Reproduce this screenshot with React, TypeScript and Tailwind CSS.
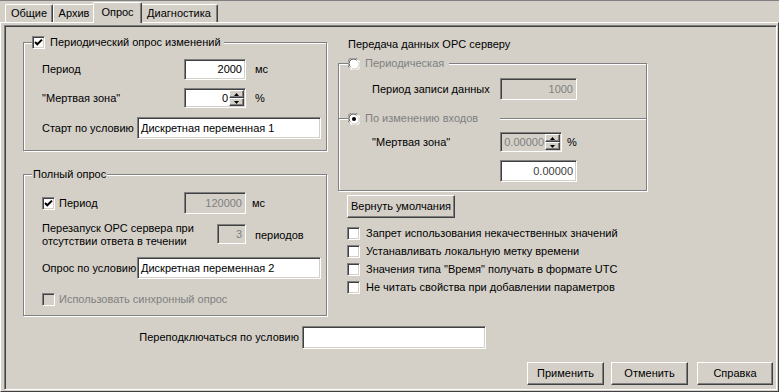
import React from 'react';

const sunken =
  'border border-t-[#808080] border-l-[#808080] border-b-white border-r-white shadow-[inset_1px_1px_0_#404040,inset_-1px_-1px_0_#d4d0c8]';
const raised =
  'border border-t-white border-l-white border-b-[#404040] border-r-[#404040] shadow-[inset_-1px_-1px_0_#808080]';
const etched = 'border border-[#808080] shadow-[inset_1px_1px_0_#fff,1px_1px_0_#fff]';

interface FieldProps {
  w: string;
  h: string;
  value?: string;
  disabled?: boolean;
  left?: boolean;
  dim?: boolean;
}

const Field: React.FC<FieldProps> = ({ w, h, value = '', disabled, left, dim }) => (
  <div
    className={`${sunken} ${w} ${h} flex items-center shrink-0 px-[3px] ${
      disabled ? 'bg-[#d4d0c8] text-[#808080]' : 'bg-white'
    } ${dim ? 'text-[#404040]' : ''} ${left ? 'justify-start' : 'justify-end'}`}
  >
    {value}
  </div>
);

const Spin: React.FC<{ w: string; value: string; disabled?: boolean }> = ({ w, value, disabled }) => (
  <div className={`${sunken} ${w} h-[20px] flex shrink-0 ${disabled ? 'bg-[#d4d0c8] text-[#808080]' : 'bg-white'}`}>
    <div className="flex-1 flex items-center justify-end pr-[1px] pl-[3px]">{value}</div>
    <div className="w-[15px] flex flex-col my-[1px] mr-[1px]">
      <div className={`${raised} flex-1 bg-[#d4d0c8] flex items-center justify-center`}>
        <svg width="5" height="3" viewBox="0 0 5 3">
          <path d="M2.5 0 L5 3 L0 3 Z" fill="#000" />
        </svg>
      </div>
      <div className={`${raised} flex-1 bg-[#d4d0c8] flex items-center justify-center`}>
        <svg width="5" height="3" viewBox="0 0 5 3">
          <path d="M0 0 L5 0 L2.5 3 Z" fill="#000" />
        </svg>
      </div>
    </div>
  </div>
);

const Check: React.FC<{ checked?: boolean; disabled?: boolean }> = ({ checked, disabled }) => (
  <div className={`${sunken} w-[13px] h-[13px] shrink-0 ${disabled ? 'bg-[#d4d0c8]' : 'bg-white'} flex items-center justify-center`}>
    {checked && (
      <svg width="9" height="9" viewBox="0 0 9 9">
        <path d="M1 4 L3.3 6.3 L8 1.6" stroke="#000" strokeWidth="2" fill="none" />
      </svg>
    )}
  </div>
);

const Radio: React.FC<{ checked?: boolean }> = ({ checked }) => (
  <svg width="12" height="12" viewBox="0 0 12 12" className="shrink-0">
    <circle cx="6" cy="6" r="5.5" fill="#fff" />
    <path d="M1.2 9.5 A5.5 5.5 0 0 1 9.5 1.2" stroke="#808080" strokeWidth="1" fill="none" />
    <path d="M2.3 8.6 A4.4 4.4 0 0 1 8.6 2.3" stroke="#404040" strokeWidth="1" fill="none" />
    <path d="M10.8 2.5 A5.5 5.5 0 0 1 2.5 10.8" stroke="#fff" strokeWidth="1" fill="none" />
    <path d="M9.7 3.4 A4.4 4.4 0 0 1 3.4 9.7" stroke="#d4d0c8" strokeWidth="1" fill="none" />
    {checked && <circle cx="6" cy="6" r="2" fill="#000" />}
  </svg>
);

const Button: React.FC<{ w: string; children: React.ReactNode; className?: string }> = ({ w, children, className = '' }) => (
  <div className={`${raised} ${w} h-[23px] bg-[#d4d0c8] flex items-center justify-center shrink-0 ${className}`}>
    {children}
  </div>
);

const Tab: React.FC<{ label: string; w: string; active?: boolean }> = ({ label, w, active }) => (
  <div
    className={`${w} flex items-center justify-center bg-[#d4d0c8] border-t border-l border-t-white border-l-white border-r border-r-[#404040] rounded-t-[2px] shadow-[inset_-1px_0_0_#808080] ${
      active ? 'h-[21px] -mb-[1px] -mx-[2px] relative z-10 pb-[2px]' : 'h-[18px]'
    }`}
  >
    {label}
  </div>
);

const CHECKS = [
  'Запрет использования некачественных значений',
  'Устанавливать локальную метку времени',
  'Значения типа "Время" получать в формате UTC',
  'Не читать свойства при добавлении параметров',
];

export default function App() {
  return (
    <div className="w-[779px] h-[392px] bg-[#d4d0c8] border-t border-[#808080] flex flex-col overflow-hidden text-[11px] leading-[13px] text-black font-['Liberation_Sans',Arial,sans-serif]">
      {/* Tabs */}
      <div className="h-[21px] flex items-end pl-[5px] shrink-0">
        <Tab label="Общие" w="w-[48px]" />
        <Tab label="Архив" w="w-[42px]" />
        <Tab label="Опрос" w="w-[49px]" active />
        <Tab label="Диагностика" w="w-[78px]" />
      </div>

      {/* Tab page */}
      <div className="flex-1 flex flex-col border border-t-white border-l-white border-r-[#404040] border-b-[#404040]">
        <div className={`${sunken} flex-1 flex flex-col ml-[3px] mt-[2px] mr-[1px] mb-[1px]`}>
          <div className="flex pl-[18px]">
            {/* Left column */}
            <div className="w-[304px] pt-[16px] flex flex-col">
              <div className={`${etched} h-[109px] flex flex-col`}>
                <div className="-mt-[7px] ml-[8px] self-start h-[13px] bg-[#d4d0c8] pr-[3px] flex items-center gap-[5px]">
                  <Check checked />
                  <span>Периодический опрос изменений</span>
                </div>
                <div className="mt-[10px] h-[21px] pl-[18px] flex items-center">
                  <span className="w-[142px]">Период</span>
                  <Field w="w-[62px]" h="h-[21px]" value="2000" />
                  <span className="ml-[9px]">мс</span>
                </div>
                <div className="mt-[8px] h-[20px] pl-[18px] flex items-center">
                  <span className="w-[142px]">"Мертвая зона"</span>
                  <Spin w="w-[62px]" value="0" />
                  <span className="ml-[9px]">%</span>
                </div>
                <div className="mt-[9px] h-[22px] pl-[18px] flex items-center">
                  <span className="w-[95px]">Старт по условию</span>
                  <Field w="w-[184px]" h="h-[22px]" value="Дискретная переменная 1" left />
                </div>
              </div>

              <div className={`${etched} mt-[23px] h-[142px] flex flex-col`}>
                <div className="-mt-[7px] ml-[8px] self-start h-[13px] bg-[#d4d0c8] px-[1px] flex items-center">
                  Полный опрос
                </div>
                <div className="mt-[11px] h-[22px] pl-[18px] flex items-center">
                  <div className="w-[142px] flex items-center gap-[4px]">
                    <Check checked />
                    <span>Период</span>
                  </div>
                  <Field w="w-[62px]" h="h-[22px]" value="120000" disabled />
                  <span className="ml-[6px]">мс</span>
                </div>
                <div className="mt-[8px] h-[26px] pl-[18px] flex items-start">
                  <div className="w-[175px] flex flex-col">
                    <span>Перезапуск OPC сервера при</span>
                    <span>отсутствии ответа в течении</span>
                  </div>
                  <div className="mt-[2px]">
                    <Field w="w-[29px]" h="h-[20px]" value="3" disabled />
                  </div>
                  <span className="ml-[9px] self-center">периодов</span>
                </div>
                <div className="mt-[9px] h-[22px] pl-[18px] flex items-center">
                  <span className="w-[95px]">Опрос по условию</span>
                  <Field w="w-[184px]" h="h-[22px]" value="Дискретная переменная 2" left />
                </div>
                <div className="mt-[14px] h-[13px] pl-[18px] flex items-center gap-[4px]">
                  <Check disabled />
                  <span className="text-[#808080]">Использовать синхронный опрос</span>
                </div>
              </div>
            </div>

            {/* Right column */}
            <div className="w-[309px] ml-[11px] pt-[11px] flex flex-col">
              <div className="h-[14px] pl-[10px] flex items-center">Передача данных OPC серверу</div>
              <div className={`${etched} mt-[12px] h-[128px] flex flex-col`}>
                <div className="-mt-[7px] ml-[9px] self-start w-[101px] h-[13px] bg-[#d4d0c8] flex items-center gap-[5px]">
                  <Radio />
                  <span className="text-[#808080]">Периодическая</span>
                </div>
                <div className="mt-[8px] h-[22px] pl-[33px] flex items-center">
                  <span className="w-[128px]">Период записи данных</span>
                  <Field w="w-[77px]" h="h-[22px]" value="1000" disabled />
                </div>
                <div className="mt-[12px] h-[13px] flex items-center">
                  <div className="w-[9px] h-[2px] bg-white border-t border-[#808080]" />
                  <div className="w-[152px] flex items-center gap-[5px]">
                    <Radio checked />
                    <span className="text-[#808080]">По изменению входов</span>
                  </div>
                  <div className="flex-1 h-[2px] bg-white border-t border-[#808080]" />
                </div>
                <div className="mt-[7px] h-[20px] pl-[33px] flex items-center">
                  <span className="w-[128px]">"Мертвая зона"</span>
                  <Spin w="w-[62px]" value="0.00000" disabled />
                  <span className="ml-[5px]">%</span>
                </div>
                <div className="mt-[8px] pl-[161px] flex">
                  <Field w="w-[77px]" h="h-[22px]" value="0.00000" dim />
                </div>
              </div>

              <Button w="w-[108px]" className="mt-[4px] ml-[9px]">
                Вернуть умолчания
              </Button>

              <div className="mt-[9px] pl-[9px] flex flex-col gap-[5px]">
                {CHECKS.map((c) => (
                  <div key={c} className="h-[13px] flex items-center gap-[6px]">
                    <Check />
                    <span>{c}</span>
                  </div>
                ))}
              </div>
            </div>
          </div>

          {/* Bottom */}
          <div className="mt-[10px] h-[23px] flex items-center">
            <span className="w-[294px] text-right">Переподключаться по условию</span>
            <div className="ml-[3px]">
              <Field w="w-[184px]" h="h-[23px]" />
            </div>
          </div>

          <div className="mt-[13px] flex justify-end pr-[3px]">
            <Button w="w-[77px]">Применить</Button>
            <Button w="w-[77px]" className="ml-[7px]">
              Отменить
            </Button>
            <Button w="w-[76px]" className="ml-[9px]">
              Справка
            </Button>
          </div>
        </div>
      </div>
    </div>
  );
}
